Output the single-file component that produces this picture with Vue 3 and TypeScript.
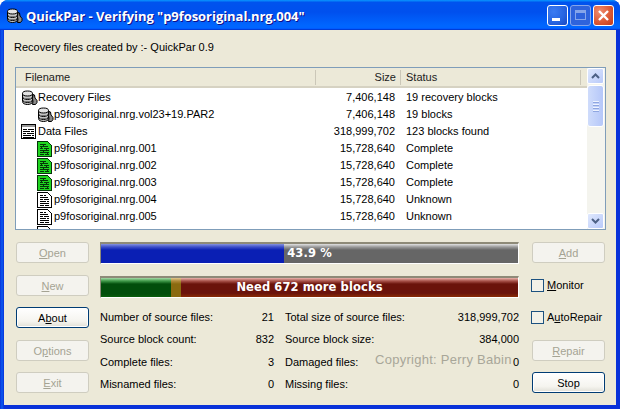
<script setup lang="ts">
type Kind = 'disk' | 'multi' | 'green' | 'doc'
interface Row { name: string; size: string; status: string; kind: Kind; child: boolean }

const rows: Row[] = [
  { name: 'Recovery Files', size: '7,406,148', status: '19 recovery blocks', kind: 'disk', child: false },
  { name: 'p9fosoriginal.nrg.vol23+19.PAR2', size: '7,406,148', status: '19 blocks', kind: 'disk', child: true },
  { name: 'Data Files', size: '318,999,702', status: '123 blocks found', kind: 'multi', child: false },
  { name: 'p9fosoriginal.nrg.001', size: '15,728,640', status: 'Complete', kind: 'green', child: true },
  { name: 'p9fosoriginal.nrg.002', size: '15,728,640', status: 'Complete', kind: 'green', child: true },
  { name: 'p9fosoriginal.nrg.003', size: '15,728,640', status: 'Complete', kind: 'green', child: true },
  { name: 'p9fosoriginal.nrg.004', size: '15,728,640', status: 'Unknown', kind: 'doc', child: true },
  { name: 'p9fosoriginal.nrg.005', size: '15,728,640', status: 'Unknown', kind: 'doc', child: true },
  { name: '', size: '', status: '', kind: 'doc', child: true },
]

const stats = [
  [['Number of source files:', '21'], ['Total size of source files:', '318,999,702']],
  [['Source block count:', '832'], ['Source block size:', '384,000']],
  [['Complete files:', '3'], ['Damaged files:', '0']],
  [['Misnamed files:', '0'], ['Missing files:', '0']],
]

const blockSegments = [
  { cls: 'seg-green', width: 70 },
  { cls: 'seg-olive', width: 10 },
  { cls: 'seg-red', width: 337 },
]
</script>

<template>
  <div class="window">
    <svg class="defs" width="0" height="0" aria-hidden="true">
      <symbol id="disk" viewBox="0 0 17 16">
        <g stroke="#000" stroke-width="1" fill="#c4c4c4">
          <path d="M1.5 3.5v8c0 2 2.5 3 5 3s5-1 5-3v-8z" />
          <ellipse cx="6.5" cy="3.5" rx="5" ry="2.5" fill="#e4e4e4" />
          <path d="M1.5 6.5c0 2 2.5 3 5 3s5-1 5-3M1.5 9.500c0 2 2.500 3 5 3s5-1 5-3" fill="none" />
        </g>
        <path d="M3 8.500h7M3 11.500h7" stroke="#777" fill="none" />
        <path d="M12 4.500l1.500.5.500 3 2 2.500v2l-1.500 2h-3l.500-3-.500-3z" fill="#8a8a8a" stroke="#000" />
      </symbol>
      <symbol id="multi" viewBox="0 0 17 16">
        <g shape-rendering="crispEdges">
          <rect x="0.5" y="0.5" width="14" height="14" fill="#fff" stroke="#000" />
          <rect x="1" y="1" width="13" height="2" fill="#999" />
          <path d="M2 5.500h4M7 5.500h6M2 7.500h7M10 7.500h3M2 9.500h3M6 9.500h7M2 11.500h8M11 11.500h2M2 13.500h11" stroke="#000" />
        </g>
      </symbol>
      <symbol id="doc" viewBox="0 0 17 16">
        <g shape-rendering="crispEdges">
          <path d="M0.500 0.500h10l3.500 3.500v11.500h-13.500z" fill="#fff" stroke="#000" />
          <path d="M3 3.500h3M7 3.500h2M3 5.500h8M3 7.500h3M7 7.500h5M3 9.500h6M10 9.500h2M3 11.500h9M3 13.500h4M8 13.500h4" stroke="#000" />
        </g>
      </symbol>
      <symbol id="green" viewBox="0 0 17 16">
        <g shape-rendering="crispEdges">
          <path d="M0.500 0.500h10l3.500 3.500v11.500h-13.500z" fill="#1fd51f" stroke="#06330a" />
          <path d="M3 3.500h3M7 3.500h2M3 5.500h8M3 7.500h3M7 7.500h5M3 9.500h6M10 9.500h2M3 11.500h9M3 13.500h4M8 13.500h4" stroke="#06330a" />
          <path d="M6.500 3v2M4.500 6v2M9.500 8v2M6.500 10v2M10.500 12v2" stroke="#06330a" />
        </g>
      </symbol>
    </svg>

    <header class="titlebar">
      <svg class="app-icon" width="17" height="16"><use href="#disk" /></svg>
      <span class="title">QuickPar - Verifying "p9fosoriginal.nrg.004"</span>
      <div class="controls">
        <span class="ctl ctl-min"><i></i></span>
        <span class="ctl ctl-max"><i></i></span>
        <span class="ctl ctl-close">
          <svg width="13" height="13" viewBox="0 0 13 13"><path d="M2 2l9 9M11 2l-9 9" stroke="#fff" stroke-width="2.4" /></svg>
        </span>
      </div>
    </header>

    <main class="client">
      <p class="created">Recovery files created by :- QuickPar 0.9</p>

      <section class="list">
        <div class="list-main">
          <div class="list-head">
            <span class="h-name">Filename</span>
            <span class="h-size">Size</span>
            <span class="h-status">Status</span>
          </div>
          <div class="list-body">
            <div v-for="(row, i) in rows" :key="i" class="row">
              <span class="c-name" :class="{ child: row.child }">
                <svg class="ico" width="17" height="16"><use :href="'#' + row.kind" /></svg>
                {{ row.name }}
              </span>
              <span class="c-size">{{ row.size }}</span>
              <span class="c-status">{{ row.status }}</span>
            </div>
          </div>
        </div>
        <div class="scroll">
          <span class="sb-btn">
            <svg width="9" height="6" viewBox="0 0 9 6"><path d="M1 5l3.500-3.500L8 5" fill="none" stroke="#4d6185" stroke-width="2" /></svg>
          </span>
          <span class="sb-thumb"><i></i><i></i><i></i><i></i></span>
          <span class="sb-track"></span>
          <span class="sb-btn">
            <svg width="9" height="6" viewBox="0 0 9 6"><path d="M1 1l3.500 3.500L8 1" fill="none" stroke="#4d6185" stroke-width="2" /></svg>
          </span>
        </div>
      </section>

      <section class="bottom">
        <div class="btn-col">
          <button class="btn" disabled><u>O</u>pen</button>
          <button class="btn" disabled><u>N</u>ew</button>
          <button class="btn on">A<u>b</u>out</button>
          <button class="btn" disabled>O<u>p</u>tions</button>
          <button class="btn" disabled><u>E</u>xit</button>
        </div>

        <div class="mid">
          <div class="bar">
            <div class="fill seg-blue" style="width: 183px"></div>
            <div class="fill seg-gray grow"></div>
            <span class="bar-text">43.9 %</span>
          </div>
          <div class="bar bar2">
            <div
              v-for="s in blockSegments"
              :key="s.cls"
              class="fill"
              :class="s.cls"
              :style="{ width: s.width + 'px' }"
            ></div>
            <span class="bar-text">Need 672 more blocks</span>
          </div>
          <div class="stats">
            <div v-for="(line, i) in stats" :key="i" class="stat-line">
              <div v-for="cell in line" :key="cell[0]" class="stat">
                <span>{{ cell[0] }}</span><span>{{ cell[1] }}</span>
              </div>
            </div>
            <span class="copyright">Copyright:  Perry Babin</span>
          </div>
        </div>

        <div class="btn-col">
          <button class="btn" disabled><u>A</u>dd</button>
          <label class="check"><input type="checkbox" /><span><u>M</u>onitor</span></label>
          <label class="check"><input type="checkbox" /><span>A<u>u</u>toRepair</span></label>
          <button class="btn" disabled><u>R</u>epair</button>
          <button class="btn on">Stop</button>
        </div>
      </section>
    </main>
  </div>
</template>

<style>
html, body { margin: 0; background: #fff; }
</style>

<style scoped>
.window {
  width: 620px;
  height: 409px;
  display: flex;
  flex-direction: column;
  overflow: hidden;
  border-radius: 8px 8px 0 0;
  background: linear-gradient(90deg, #0831d9 0, #0a5bf0 2px, #0831d9 4px);
  font-family: "Liberation Sans", Arial, sans-serif;
  font-size: 11px;
  color: #000;
}
.defs { position: absolute; }
.titlebar {
  height: 30px;
  flex: none;
  display: flex;
  align-items: center;
  padding: 0 6px 0 6px;
  box-sizing: border-box;
  background: linear-gradient(180deg, #0997ff 0, #0053ee 8%, #0050ee 40%, #0066ff 85%, #0066ff 92%, #005bff 95%, #003dd7 97%, #003dd7 100%);
  color: #fff;
}
.app-icon { flex: none; margin-top: 2px; }
.title {
  margin: 2px 0 0 3px;
  font-family: "Open Sans", "Liberation Sans", sans-serif;
  font-weight: 700;
  font-size: 13px;
  letter-spacing: -0.05px;
  text-shadow: 1px 1px #0f1089;
  white-space: pre;
}
.controls { margin-left: auto; display: flex; gap: 2px; }
.ctl {
  width: 21px;
  height: 21px;
  box-sizing: border-box;
  border: 1px solid #fff;
  border-radius: 3px;
  display: flex;
  align-items: center;
  justify-content: center;
  position: relative;
}
.ctl-min { background: radial-gradient(circle at 30% 30%, #3c7cf2, #2663e0 60%, #1a47c0); }
.ctl-min i { position: absolute; left: 4px; bottom: 4px; width: 8px; height: 3px; background: #fff; }
.ctl-max { background: #2f63dc; border-color: #86a5ea; }
.ctl-max i { width: 11px; height: 10px; box-sizing: border-box; border: 1px solid #86a5ea; border-top-width: 3px; }
.ctl-close { background: radial-gradient(circle at 30% 30%, #ef8d70, #dd5a35 55%, #c2391a); }

.client {
  flex: 1;
  margin: 0 4px 4px;
  background: #ece9d8;
  display: flex;
  flex-direction: column;
  padding: 0 10px 0 11px;
  min-height: 0;
}
.created { margin: 0 0 0 -1px; height: 37px; line-height: 35px; }

.list {
  height: 163px;
  box-sizing: border-box;
  border: 1px solid #7f9db9;
  background: #fff;
  display: flex;
  flex: none;
}
.list-main { flex: 1; min-width: 0; display: flex; flex-direction: column; }
.list-head {
  height: 20px;
  flex: none;
  box-sizing: border-box;
  display: grid;
  grid-template-columns: 300px 85px 1fr;
  background: #ece9d8;
  border-bottom: 2px solid #d6d2c2;
  line-height: 19px;
  color: #222;
}
.list-head span { box-sizing: border-box; height: 15px; margin-top: 2px; line-height: 15px; }
.h-name { padding-left: 9px; border-right: 1px solid #cbc7b8; }
.h-size { text-align: right; padding-right: 4px; border-right: 1px solid #cbc7b8; }
.h-status { padding-left: 5px; border-right: 1px solid #cbc7b8; margin-right: 6px; }
.list-body { flex: 1; overflow: hidden; min-height: 0; padding-top: 1px; }
.row {
  height: 17px;
  display: grid;
  grid-template-columns: 300px 79px 1fr;
  line-height: 17px;
  white-space: nowrap;
}
.c-name { display: flex; align-items: center; padding-left: 5px; }
.c-name.child { padding-left: 21px; }
.ico { flex: none; }
.c-size { text-align: right; }
.c-status { padding-left: 11px; }

.scroll {
  width: 18px;
  flex: none;
  display: flex;
  flex-direction: column;
  background: #f4f4ee;
  padding-right: 1px;
  box-sizing: border-box;
}
.sb-btn {
  height: 16px;
  flex: none;
  box-sizing: border-box;
  border: 1px solid #fff;
  border-radius: 2px;
  background: linear-gradient(135deg, #dfe8fd, #b9cafa);
  display: flex;
  align-items: center;
  justify-content: center;
}
.sb-thumb {
  height: 42px;
  flex: none;
  margin-top: 1px;
  box-sizing: border-box;
  border: 1px solid #fff;
  border-radius: 3px;
  background: linear-gradient(90deg, #cfdcfb, #b5c7f9);
  display: flex;
  flex-direction: column;
  align-items: center;
  justify-content: center;
  gap: 1px;
}
.sb-thumb i { width: 6px; height: 1px; background: #eef3fe; box-shadow: 0 1px #8fa6e0; margin-bottom: 1px; }
.sb-track { flex: 1; }

.bottom {
  display: flex;
  margin-top: 12px;
  padding-left: 1px;
}
.btn-col {
  width: 73px;
  flex: none;
  display: grid;
  grid-template-rows: 33px 32px 33px 32px 21px;
}
.mid { width: 419px; flex: none; margin: 0 13px 0 11px; position: relative; }
.btn {
  height: 21px;
  box-sizing: border-box;
  padding: 0;
  font: inherit;
  border-radius: 3px;
  border: 1px solid #003c74;
  background: linear-gradient(180deg, #fff 0, #f5f4ef 70%, #e0dfd6 100%);
  color: #000;
  box-shadow: 0 0 0 1px #fff inset;
}
.btn:disabled {
  border-color: #cfcdc0;
  background: #f4f3ee;
  color: #a5a393;
  box-shadow: none;
}
.bar {
  height: 22px;
  box-sizing: border-box;
  border-top: 2px solid #8e8a78;
  border-left: 1px solid #8e8a78;
  border-right: 1px solid #fff;
  border-bottom: 1px solid #fff;
  display: flex;
  position: relative;
  overflow: hidden;
}
.bar2 { margin-top: 12px; }
.fill { height: 100%; flex: none; }
.fill.grow { flex: 1; }
.seg-blue { background: linear-gradient(180deg, #8592df 0, #3c4ec9 3px, #0a1fb4 6px, #0a1fb4 100%); }
.seg-gray { background: linear-gradient(180deg, #e2e2e2 0, #9a9a9a 3px, #666 6px, #666 100%); }
.seg-green { background: linear-gradient(180deg, #a6d9a8 0, #3f9a49 3px, #024e0c 6px, #024e0c 85%, #0b5f0c 100%); }
.seg-olive { background: linear-gradient(180deg, #e2c98f 0, #b08a3a 3px, #8a6a10 6px, #8a6a10 100%); }
.seg-red { flex: 1 !important; background: linear-gradient(180deg, #eab5ae 0, #a8524a 3px, #6a130b 6px, #6a130b 80%, #8a2c05 100%); }
.bar-text {
  position: absolute;
  inset: 0;
  text-align: center;
  line-height: 18px;
  font-family: "DejaVu Sans", sans-serif;
  font-weight: 700;
  font-size: 11.500px;
  letter-spacing: 0.1px;
  color: #fff;
}
.stats { margin-top: 8px; position: relative; }
.stat-line {
  display: grid;
  grid-template-columns: 174px 1fr;
  column-gap: 11px;
  height: 22.4px;
  line-height: 22px;
}
.stat { display: flex; justify-content: space-between; white-space: nowrap; }
.copyright {
  position: absolute;
  left: 275px;
  top: 46px;
  font-size: 13px;
  letter-spacing: 0.27px;
  line-height: 16px;
  color: #a8a698;
  white-space: pre;
}
.check { height: 33px; display: flex; align-items: flex-start; margin-left: -1px; }
.check input {
  appearance: none;
  width: 13px;
  height: 13px;
  margin: 4px 3px 0 0;
  box-sizing: border-box;
  border: 1px solid #1c5180;
  background: #f2f1e8;
  flex: none;
}
.check span { line-height: 21px; white-space: nowrap; }
</style>
